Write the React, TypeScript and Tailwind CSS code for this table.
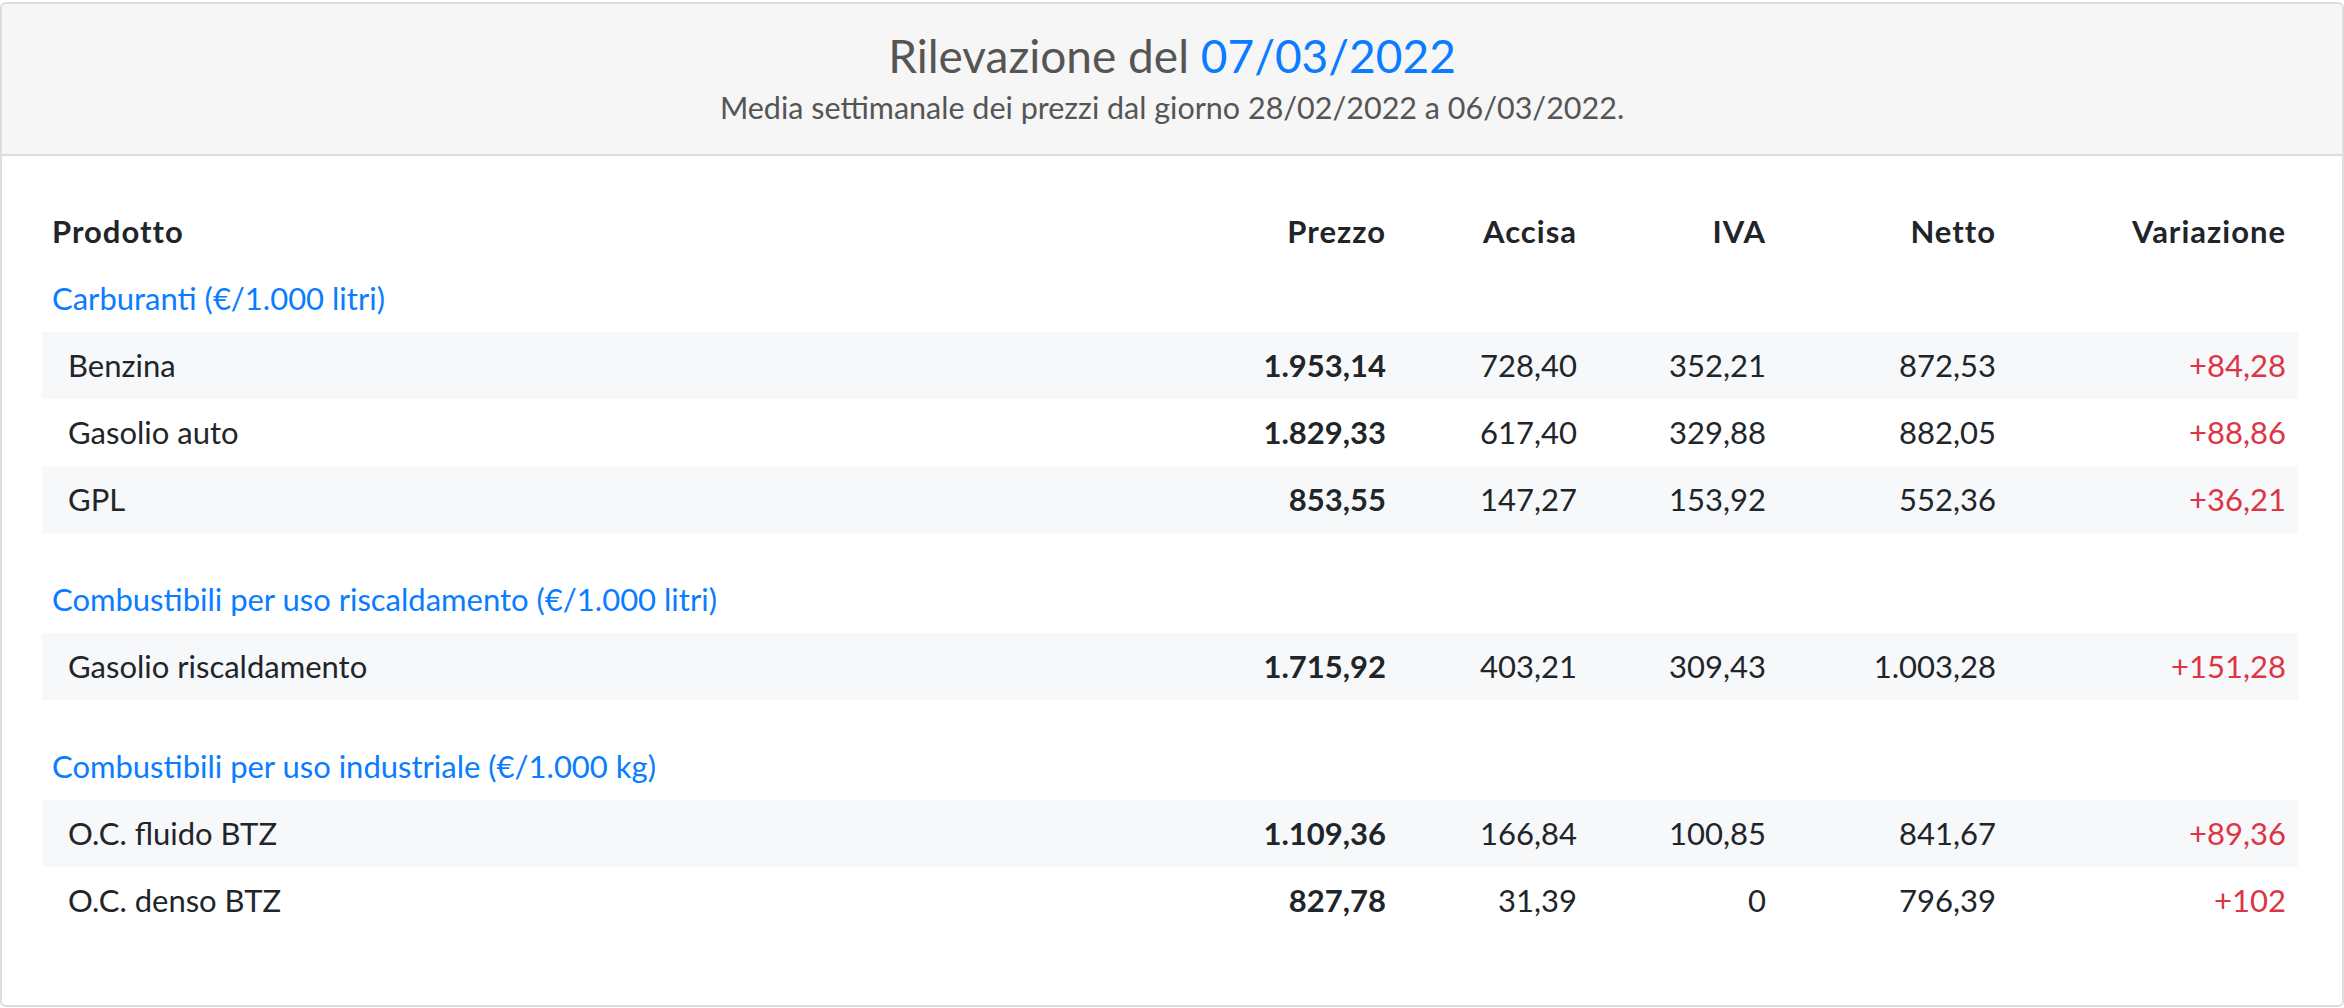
import React from "react";

type Row = { name: string; prezzo: string; accisa: string; iva: string; netto: string; variazione: string };
type Group = { title: string; rows: Row[] };

const groups: Group[] = [
  {
    title: "Carburanti (€/1.000 litri)",
    rows: [
      { name: "Benzina", prezzo: "1.953,14", accisa: "728,40", iva: "352,21", netto: "872,53", variazione: "+84,28" },
      { name: "Gasolio auto", prezzo: "1.829,33", accisa: "617,40", iva: "329,88", netto: "882,05", variazione: "+88,86" },
      { name: "GPL", prezzo: "853,55", accisa: "147,27", iva: "153,92", netto: "552,36", variazione: "+36,21" },
    ],
  },
  {
    title: "Combustibili per uso riscaldamento (€/1.000 litri)",
    rows: [
      { name: "Gasolio riscaldamento", prezzo: "1.715,92", accisa: "403,21", iva: "309,43", netto: "1.003,28", variazione: "+151,28" },
    ],
  },
  {
    title: "Combustibili per uso industriale (€/1.000 kg)",
    rows: [
      { name: "O.C. fluido BTZ", prezzo: "1.109,36", accisa: "166,84", iva: "100,85", netto: "841,67", variazione: "+89,36" },
      { name: "O.C. denso BTZ", prezzo: "827,78", accisa: "31,39", iva: "0", netto: "796,39", variazione: "+102" },
    ],
  },
];

const cols = "grid grid-cols-[1fr_200px_191px_189px_230px_290px] h-[67px] items-center";

export default function App() {
  return (
    <div
      className="w-[2344px] h-[1008px] bg-white pt-[2px] text-[#212529]"
      style={{ fontFamily: "Lato, 'Open Sans', sans-serif" }}
    >
      <div className="h-[1005px] border-2 border-[#dddddd] rounded-[6px] overflow-hidden">
        <div className="h-[152px] bg-[#f6f6f6] border-b-2 border-[#dddddd] pt-[24px] text-center text-[#555555]">
          <div className="text-[46px] leading-[1.2]">
            Rilevazione del <span className="text-[#0a7cff]">07/03/2022</span>
          </div>
          <div className="text-[30.5px] leading-[48px]">
            Media settimanale dei prezzi dal giorno 28/02/2022 a 06/03/2022.
          </div>
        </div>
        <div className="pl-[40px] pr-[44px] pt-[42px] text-[31px] leading-[1.2]">
          <div className={cols + " font-bold tracking-[1px]"}>
            <div className="pl-[10px]">Prodotto</div>
            <div className="text-right pr-[12px]">Prezzo</div>
            <div className="text-right pr-[12px]">Accisa</div>
            <div className="text-right pr-[12px]">IVA</div>
            <div className="text-right pr-[12px]">Netto</div>
            <div className="text-right pr-[12px]">Variazione</div>
          </div>
          {groups.map((g, gi) => (
            <div key={g.title}>
              {gi > 0 && <div className="h-[33px]" />}
              <div className="h-[67px] flex items-center pl-[10px] text-[#0a7cff]">{g.title}</div>
              {g.rows.map((r, ri) => (
                <div key={r.name} className={cols + (ri % 2 === 0 ? " bg-[#f7f8fa]" : " bg-white")}>
                  <div className="pl-[26px]">{r.name}</div>
                  <div className="text-right pr-[12px] font-bold">{r.prezzo}</div>
                  <div className="text-right pr-[12px]">{r.accisa}</div>
                  <div className="text-right pr-[12px]">{r.iva}</div>
                  <div className="text-right pr-[12px]">{r.netto}</div>
                  <div className="text-right pr-[12px] text-[#dc3545]">{r.variazione}</div>
                </div>
              ))}
            </div>
          ))}
        </div>
      </div>
    </div>
  );
}
